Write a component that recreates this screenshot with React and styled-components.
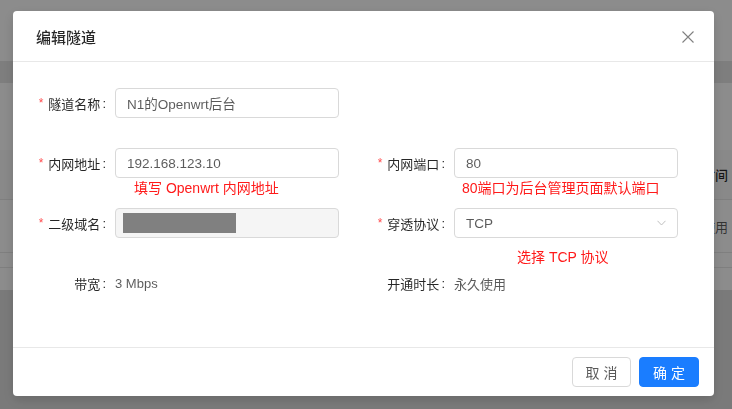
import React from 'react';
import styled, {createGlobalStyle} from 'styled-components';

const colors = {
  primary: '#1a7dff',
  danger: '#ff4d4f',
  annotation: '#ff1a1a',
  border: '#d9d9d9',
  divider: '#e8e8e8',
  heading: 'rgba(0, 0, 0, 0.85)',
  text: 'rgba(0, 0, 0, 0.65)',
  muted: '#bfbfbf'
};

const GlobalStyle = createGlobalStyle`
  html, body {
    margin: 0;
    padding: 0;
    height: 100%;
    overflow: hidden;
  }
  body {
    font-family: "Liberation Sans", "Noto Sans CJK SC", sans-serif;
    font-size: 13px;
    color: ${colors.text};
  }
  #root {
    height: 100%;
  }
`;

/* page behind the dialog */

const Page = styled.div`
  display: flex;
  flex-direction: column;
  height: 100%;
  background: #ffffff;
`;

const Spacer = styled.div`
  height: ${p => p.h}px;
  background: ${p => p.bg || '#ffffff'};
`;

const TableRow = styled.div`
  display: flex;
  justify-content: flex-end;
  align-items: center;
  height: ${p => p.h}px;
  padding-right: 4px;
  background: ${p => (p.head ? '#fafafa' : '#ffffff')};
  border-bottom: 1px solid ${colors.divider};
  color: ${p => (p.head ? colors.heading : colors.text)};
  font-weight: ${p => (p.head ? 500 : 400)};
`;

const PageRest = styled.div`
  flex: 1;
  background: #dfdfdf;
`;

/* dialog */

const Overlay = styled.div`
  position: fixed;
  inset: 0;
  background: rgba(0, 0, 0, 0.45);
`;

const Modal = styled.div`
  display: flex;
  flex-direction: column;
  width: 701px;
  height: 385px;
  margin: 11px 0 0 13px;
  background: #ffffff;
  border-radius: 4px;
  box-shadow: 0 4px 12px rgba(0, 0, 0, 0.15);
`;

const Header = styled.div`
  display: flex;
  justify-content: space-between;
  align-items: center;
  height: 50px;
  padding: 0 20px 0 23px;
  border-bottom: 1px solid ${colors.divider};
`;

const Title = styled.div`
  color: ${colors.heading};
  font-family: "Noto Sans CJK SC", sans-serif;
  font-size: 15px;
  font-weight: 500;
`;

const Close = styled.div`
  display: flex;
  margin-top: 2px;
`;

const Body = styled.div`
  flex: 1;
  padding: 26px 0 0 17px;
`;

const FormRow = styled.div`
  display: flex;
  gap: 30px;
  height: ${p => p.h || 60}px;
`;

const Field = styled.div`
  display: flex;
`;

const Label = styled.div`
  display: flex;
  justify-content: flex-end;
  align-items: center;
  width: 85px;
  height: 30px;
  color: ${colors.heading};
  white-space: nowrap;

  &::after {
    content: ':';
    margin: 0 9px 0 2px;
  }
`;

const Required = styled.span`
  margin-right: 5px;
  color: ${colors.danger};
  font-size: 12px;
`;

const Control = styled.div`
  display: flex;
  flex-direction: column;
  width: 224px;
`;

const Input = styled.div`
  display: flex;
  align-items: center;
  justify-content: space-between;
  box-sizing: border-box;
  height: 30px;
  padding: 0 ${p => (p.disabled ? 7 : 11)}px;
  border: 1px solid ${colors.border};
  border-radius: 4px;
  background: ${p => (p.disabled ? '#f5f5f5' : '#ffffff')};
  color: ${colors.text};
  font-size: 13.5px;
`;

const Redacted = styled.span`
  width: 113px;
  height: 20px;
  background: #808080;
`;

const Value = styled.div`
  display: flex;
  align-items: center;
  height: 30px;
  color: ${colors.text};
  font-size: 13px;
`;

const Hint = styled.div`
  margin: ${p => p.top || 0}px 0 0 ${p => p.left || 0}px;
  line-height: 20px;
  color: ${colors.annotation};
  font-size: 14px;
  white-space: nowrap;
`;

const Footer = styled.div`
  display: flex;
  justify-content: flex-end;
  gap: 8px;
  padding: 9px 15px;
  border-top: 1px solid ${colors.divider};
`;

const Button = styled.button`
  width: ${p => (p.primary ? 60 : 59)}px;
  height: 30px;
  padding: 0;
  border: 1px solid ${p => (p.primary ? colors.primary : colors.border)};
  border-radius: 4px;
  background: ${p => (p.primary ? colors.primary : '#ffffff')};
  color: ${p => (p.primary ? '#ffffff' : colors.text)};
  font-family: "Noto Sans CJK SC", sans-serif;
  font-size: 14px;
  letter-spacing: 4px;
  text-indent: 4px;
`;

const CloseIcon = () => (
  <svg width="12" height="12" viewBox="0 0 12 12">
    <path d="M0.5 0.5 L11.5 11.5 M11.5 0.5 L0.5 11.5" stroke="#808080" strokeWidth="1.1" fill="none" />
  </svg>
);

const ArrowDown = () => (
  <svg width="9" height="6" viewBox="0 0 9 6">
    <path d="M0.5 0.8 L4.5 5 L8.5 0.8" stroke={colors.muted} strokeWidth="1" fill="none" />
  </svg>
);

const FormField = ({label, required, children}) => (
  <Field>
    <Label>
      {required && <Required>*</Required>}
      {label}
    </Label>
    <Control>{children}</Control>
  </Field>
);

const App = () => (
  <>
    <GlobalStyle />
    <Page>
      <Spacer h={61} />
      <Spacer h={22} bg="#e6e6e6" />
      <Spacer h={67} />
      <TableRow head h={49}>开通时间</TableRow>
      <TableRow h={52}>永久使用</TableRow>
      <TableRow h={14} />
      <Spacer h={22} />
      <PageRest />
    </Page>
    <Overlay>
      <Modal>
        <Header>
          <Title>编辑隧道</Title>
          <Close><CloseIcon /></Close>
        </Header>
        <Body>
          <FormRow>
            <FormField label="隧道名称" required>
              <Input>N1的Openwrt后台</Input>
            </FormField>
          </FormRow>
          <FormRow>
            <FormField label="内网地址" required>
              <Input>192.168.123.10</Input>
              <Hint left={19}>填写 Openwrt 内网地址</Hint>
            </FormField>
            <FormField label="内网端口" required>
              <Input>80</Input>
              <Hint left={8}>80端口为后台管理页面默认端口</Hint>
            </FormField>
          </FormRow>
          <FormRow>
            <FormField label="二级域名" required>
              <Input disabled><Redacted /></Input>
            </FormField>
            <FormField label="穿透协议" required>
              <Input>
                TCP
                <ArrowDown />
              </Input>
              <Hint left={63} top={9}>选择 TCP 协议</Hint>
            </FormField>
          </FormRow>
          <FormRow h={30}>
            <FormField label="带宽">
              <Value>3 Mbps</Value>
            </FormField>
            <FormField label="开通时长">
              <Value>永久使用</Value>
            </FormField>
          </FormRow>
        </Body>
        <Footer>
          <Button>取消</Button>
          <Button primary>确定</Button>
        </Footer>
      </Modal>
    </Overlay>
  </>
);

export default App;
